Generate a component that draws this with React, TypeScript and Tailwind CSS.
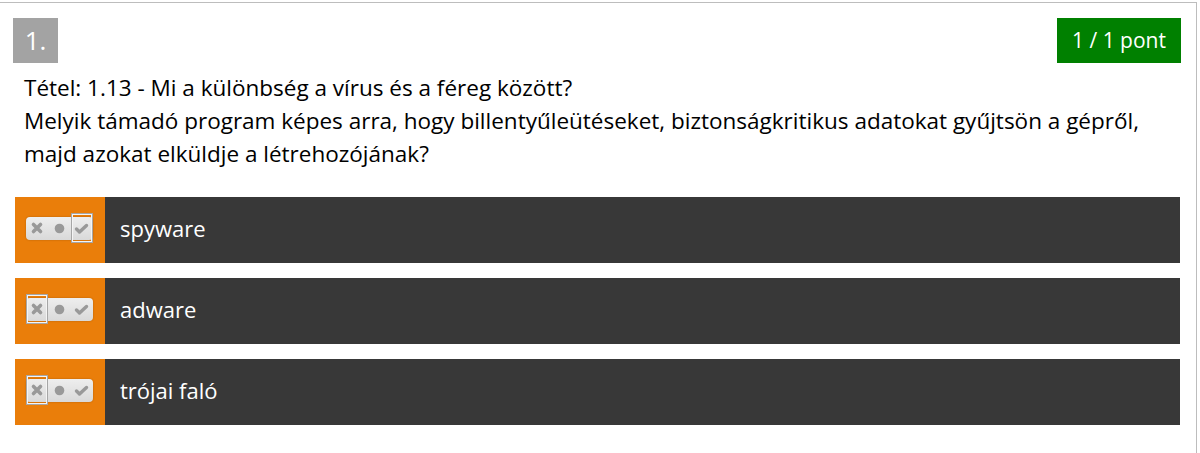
import React from "react";

type Choice = { label: string; state: "yes" | "no" };

const choices: Choice[] = [
  { label: "spyware", state: "yes" },
  { label: "adware", state: "no" },
  { label: "trójai faló", state: "no" },
];

function TriToggle({ state }: { state: "yes" | "no" }) {
  return (
    <div className="relative -mt-[3px] h-[23px] w-[67px] rounded-[4px] bg-gradient-to-b from-[#eeeeee] to-[#d9d9d9] shadow-[0_0_2px_rgba(0,0,0,0.25)]">
      <svg width="67" height="23" viewBox="0 0 67 23" className="absolute inset-0" aria-hidden="true">
        <path d="M7.5 7.5 L14.5 14.5 M14.5 7.5 L7.5 14.5" stroke="#999999" strokeWidth="3.6" strokeLinecap="round" />
        <circle cx="33.5" cy="11.5" r="4.8" fill="#999999" />
        <path d="M50.5 12 L53.5 15 L60.5 8.5" stroke="#999999" strokeWidth="3.4" strokeLinecap="round" strokeLinejoin="round" fill="none" />
      </svg>
      <div
        className={
          state === "yes"
            ? "absolute -top-[4px] right-0 h-[30px] w-[22px] border border-[#a6a6a6] shadow-[inset_0_0_0_1px_#f4f4f4]"
            : "absolute -top-[4px] left-0 h-[30px] w-[22px] border border-[#a6a6a6] shadow-[inset_0_0_0_1px_#f4f4f4]"
        }
      />
    </div>
  );
}

export default function App() {
  return (
    <div className="h-[453px] w-[1200px] bg-white pt-[2px] font-['Open_Sans',sans-serif]">
      <div className="h-[451px] w-[1197px] border-t border-r border-[#bdbdbd] pl-[13px] pr-[15px] pt-[15px]">
        <div className="flex items-start justify-between">
          <div className="flex h-[45px] w-[45px] items-center justify-center bg-[#a3a3a3] text-[26px] text-white">1.</div>
          <div className="flex h-[45px] w-[124px] items-center justify-center bg-[#008000] text-[21px] text-white">1 / 1 pont</div>
        </div>
        <p className="mt-[8px] pl-[11px] text-[22.5px] leading-[33px] text-black">
          Tétel: 1.13 - Mi a különbség a vírus és a féreg között?
          <br />
          Melyik támadó program képes arra, hogy billentyűleütéseket, biztonságkritikus adatokat gyűjtsön a gépről, majd azokat elküldje a létrehozójának?
        </p>
        <div className="mt-[27px] flex flex-col gap-[15px] pl-[2px] pr-[1px]">
          {choices.map((c) => (
            <div key={c.label} className="flex h-[66px]">
              <div className="flex w-[90px] items-center bg-[#ea7e0a] pl-[11px]">
                <TriToggle state={c.state} />
              </div>
              <div className="flex flex-1 items-center bg-[#383838] pb-[4px] pl-[15px] text-[22px] text-white">{c.label}</div>
            </div>
          ))}
        </div>
      </div>
    </div>
  );
}
